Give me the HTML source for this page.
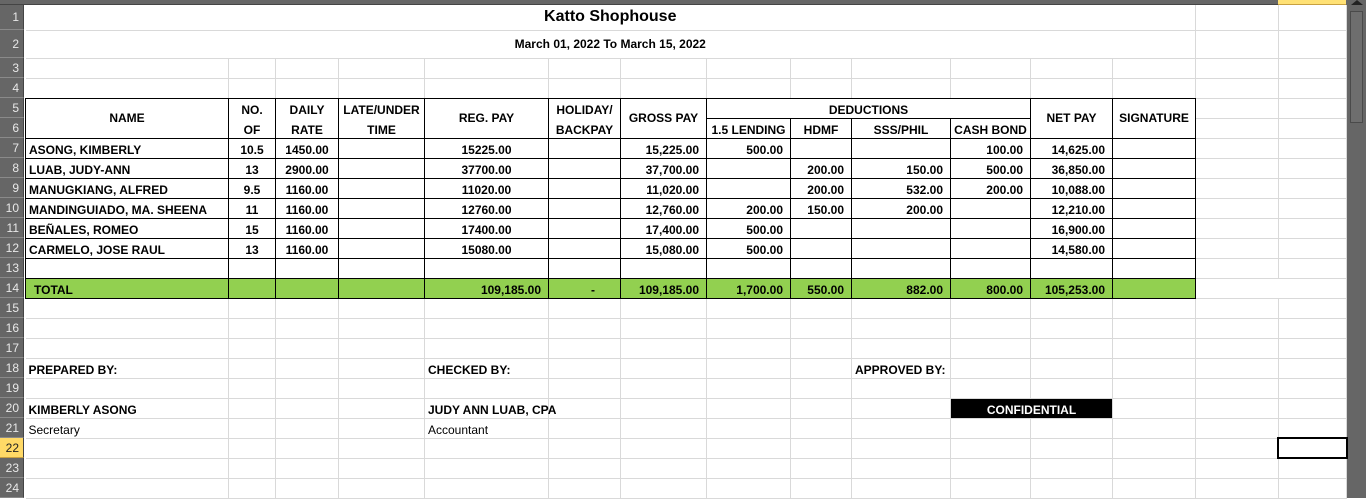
<!DOCTYPE html>
<html><head><meta charset="utf-8"><style>
body{margin:0;width:1366px;height:498px;overflow:hidden;background:#fff;position:relative;font-family:"Liberation Sans",sans-serif;}
.hdr{position:absolute;left:0;top:0;width:1346px;height:5px;background:#666;border-bottom:1px solid #444;box-sizing:border-box}
.rh{position:absolute;left:0;width:24px;background:#666;color:#e8e8e8;font-size:12px;text-align:right;box-sizing:border-box;padding-right:4px;border-bottom:1px solid #8a8a8a;border-right:1px solid #444}
table{position:absolute;left:25px;top:5px;border-collapse:collapse;table-layout:fixed;width:1321px}
td{border:none;border-right:1px solid #d9d9d9;border-bottom:1px solid #d9d9d9;padding:0 3px;font-size:12px;font-weight:bold;white-space:nowrap;overflow:hidden;vertical-align:bottom;line-height:16px;color:#000}
tr{height:20px}
.k{border-right:1px solid #000;border-bottom:1px solid #000}
.kb{border-bottom:1px solid #000}
.kl{border-left:1px solid #000}
.c{text-align:center}
.r{text-align:right;padding-right:7px}
.g{background:#92d050}
.n{font-weight:normal}
</style></head><body>
<div class="hdr"></div>
<div style="position:absolute;left:1278px;top:0;width:68px;height:5px;background:#ffe175;border-bottom:1px solid #c8a040;box-sizing:border-box"></div>
<div style="position:absolute;left:1346px;top:0;width:20px;height:498px;background:#666"></div>
<div style="position:absolute;left:1350px;top:11px;width:13px;height:112px;background:#6e6e6e;border:1px solid #4a4a4a;box-sizing:border-box"></div>
<div style="position:absolute;left:1351px;top:0;width:0;height:0;border-left:6px solid transparent;border-right:6px solid transparent;border-bottom:5px solid #222"></div>

<div class="rh" style="top:5px;height:25px;line-height:24px">1</div>
<div class="rh" style="top:30px;height:28px;line-height:28px">2</div>
<div class="rh" style="top:58px;height:20px;line-height:20px">3</div>
<div class="rh" style="top:78px;height:20px;line-height:20px">4</div>
<div class="rh" style="top:98px;height:20px;line-height:20px">5</div>
<div class="rh" style="top:118px;height:20px;line-height:20px">6</div>
<div class="rh" style="top:138px;height:20px;line-height:20px">7</div>
<div class="rh" style="top:158px;height:20px;line-height:20px">8</div>
<div class="rh" style="top:178px;height:20px;line-height:20px">9</div>
<div class="rh" style="top:198px;height:20px;line-height:20px">10</div>
<div class="rh" style="top:218px;height:20px;line-height:20px">11</div>
<div class="rh" style="top:238px;height:20px;line-height:20px">12</div>
<div class="rh" style="top:258px;height:20px;line-height:20px">13</div>
<div class="rh" style="top:278px;height:20px;line-height:20px">14</div>
<div class="rh" style="top:298px;height:20px;line-height:20px">15</div>
<div class="rh" style="top:318px;height:20px;line-height:20px">16</div>
<div class="rh" style="top:338px;height:20px;line-height:20px">17</div>
<div class="rh" style="top:358px;height:20px;line-height:20px">18</div>
<div class="rh" style="top:378px;height:20px;line-height:20px">19</div>
<div class="rh" style="top:398px;height:20px;line-height:20px">20</div>
<div class="rh" style="top:418px;height:20px;line-height:20px">21</div>
<div class="rh" style="top:438px;height:20px;line-height:20px;background:#ffd966;color:#222;border-bottom:1px solid #c8a040">22</div>
<div class="rh" style="top:458px;height:20px;line-height:20px">23</div>
<div class="rh" style="top:478px;height:20px;line-height:20px">24</div>

<table>
<colgroup><col style="width:203px"><col style="width:47px"><col style="width:63px"><col style="width:86px"><col style="width:124px"><col style="width:72px"><col style="width:86px"><col style="width:84px"><col style="width:61px"><col style="width:99px"><col style="width:80px"><col style="width:82px"><col style="width:83px"><col style="width:83px"><col style="width:68px"></colgroup>
<tr style="height:25px"><td colspan="13" class="c" style="font-size:16px;line-height:22px;vertical-align:middle">Katto Shophouse</td><td></td><td></td></tr>
<tr style="height:28px"><td colspan="13" class="c" style="font-size:12px;line-height:24px;vertical-align:middle">March 01, 2022 To March 15, 2022</td><td></td><td></td></tr>
<tr><td></td><td></td><td></td><td></td><td></td><td></td><td></td><td></td><td></td><td></td><td></td><td></td><td></td><td></td><td></td></tr>
<tr><td class="kb"></td><td class="kb"></td><td class="kb"></td><td class="kb"></td><td class="kb"></td><td class="kb"></td><td class="kb"></td><td class="kb"></td><td class="kb"></td><td class="kb"></td><td class="kb"></td><td class="kb"></td><td class="kb"></td><td></td><td></td></tr>
<tr><td rowspan="2" class="k kl c" style="vertical-align:middle">NAME</td><td class="c" style="border-right:1px solid #000;border-bottom:none">NO.</td><td class="c" style="border-right:1px solid #000;border-bottom:none">DAILY</td><td class="c" style="border-right:1px solid #000;border-bottom:none;padding:0 1px">LATE/UNDER</td><td rowspan="2" class="k c" style="vertical-align:middle">REG. PAY</td><td class="c" style="border-right:1px solid #000;border-bottom:none">HOLIDAY/</td><td rowspan="2" class="k c" style="vertical-align:middle">GROSS PAY</td><td colspan="4" class="k c">DEDUCTIONS</td><td rowspan="2" class="k c" style="vertical-align:middle">NET PAY</td><td rowspan="2" class="k c" style="vertical-align:middle">SIGNATURE</td><td></td><td></td></tr>
<tr><td class="k c">OF</td><td class="k c">RATE</td><td class="k c">TIME</td><td class="k c">BACKPAY</td><td class="k c" style="padding:0 1px">1.5 LENDING</td><td class="k c">HDMF</td><td class="k c">SSS/PHIL</td><td class="k c" style="padding:0 1px">CASH BOND</td><td></td><td></td></tr>
<tr><td class="k kl">ASONG, KIMBERLY</td><td class="k c">10.5</td><td class="k c">1450.00</td><td class="k"></td><td class="k c">15225.00</td><td class="k"></td><td class="k r">15,225.00</td><td class="k r">500.00</td><td class="k r"></td><td class="k r"></td><td class="k r">100.00</td><td class="k r">14,625.00</td><td class="k"></td><td></td><td></td></tr>
<tr><td class="k kl">LUAB, JUDY-ANN</td><td class="k c">13</td><td class="k c">2900.00</td><td class="k"></td><td class="k c">37700.00</td><td class="k"></td><td class="k r">37,700.00</td><td class="k r"></td><td class="k r">200.00</td><td class="k r">150.00</td><td class="k r">500.00</td><td class="k r">36,850.00</td><td class="k"></td><td></td><td></td></tr>
<tr><td class="k kl">MANUGKIANG, ALFRED</td><td class="k c">9.5</td><td class="k c">1160.00</td><td class="k"></td><td class="k c">11020.00</td><td class="k"></td><td class="k r">11,020.00</td><td class="k r"></td><td class="k r">200.00</td><td class="k r">532.00</td><td class="k r">200.00</td><td class="k r">10,088.00</td><td class="k"></td><td></td><td></td></tr>
<tr><td class="k kl">MANDINGUIADO, MA. SHEENA</td><td class="k c">11</td><td class="k c">1160.00</td><td class="k"></td><td class="k c">12760.00</td><td class="k"></td><td class="k r">12,760.00</td><td class="k r">200.00</td><td class="k r">150.00</td><td class="k r">200.00</td><td class="k r"></td><td class="k r">12,210.00</td><td class="k"></td><td></td><td></td></tr>
<tr><td class="k kl">BEÑALES, ROMEO</td><td class="k c">15</td><td class="k c">1160.00</td><td class="k"></td><td class="k c">17400.00</td><td class="k"></td><td class="k r">17,400.00</td><td class="k r">500.00</td><td class="k r"></td><td class="k r"></td><td class="k r"></td><td class="k r">16,900.00</td><td class="k"></td><td></td><td></td></tr>
<tr><td class="k kl">CARMELO, JOSE RAUL</td><td class="k c">13</td><td class="k c">1160.00</td><td class="k"></td><td class="k c">15080.00</td><td class="k"></td><td class="k r">15,080.00</td><td class="k r">500.00</td><td class="k r"></td><td class="k r"></td><td class="k r"></td><td class="k r">14,580.00</td><td class="k"></td><td></td><td></td></tr>
<tr><td class="k kl"></td><td class="k"></td><td class="k"></td><td class="k"></td><td class="k"></td><td class="k"></td><td class="k"></td><td class="k"></td><td class="k"></td><td class="k"></td><td class="k"></td><td class="k"></td><td class="k"></td><td></td><td></td></tr>
<tr class="g"><td class="k kl" style="padding-left:8px">TOTAL</td><td class="k"></td><td class="k"></td><td class="k"></td><td class="k r">109,185.00</td><td class="k c" style="padding-left:20px">-</td><td class="k r">109,185.00</td><td class="k r">1,700.00</td><td class="k r">550.00</td><td class="k r">882.00</td><td class="k r">800.00</td><td class="k r">105,253.00</td><td class="k"></td><td style="background:#fff;border-right-color:#fff"></td><td style="background:#fff"></td></tr>
<tr><td></td><td></td><td></td><td></td><td></td><td></td><td></td><td></td><td></td><td></td><td></td><td></td><td></td><td></td><td></td></tr>
<tr><td></td><td></td><td></td><td></td><td></td><td></td><td></td><td></td><td></td><td></td><td></td><td></td><td></td><td></td><td></td></tr>
<tr><td></td><td></td><td></td><td></td><td></td><td></td><td></td><td></td><td></td><td></td><td></td><td></td><td></td><td></td><td></td></tr>
<tr><td>PREPARED BY:</td><td></td><td></td><td></td><td>CHECKED BY:</td><td></td><td></td><td></td><td></td><td style="overflow:visible">APPROVED BY:</td><td></td><td></td><td></td><td></td><td></td></tr>
<tr><td></td><td></td><td></td><td></td><td></td><td></td><td></td><td></td><td></td><td></td><td></td><td></td><td></td><td></td><td></td></tr>
<tr><td>KIMBERLY ASONG</td><td></td><td></td><td></td><td style="overflow:visible">JUDY ANN LUAB, CPA</td><td></td><td></td><td></td><td></td><td></td><td colspan="2" class="c" style="background:#000;color:#fff">CONFIDENTIAL</td><td></td><td></td><td></td></tr>
<tr><td class="n">Secretary</td><td></td><td></td><td></td><td class="n">Accountant</td><td></td><td></td><td></td><td></td><td></td><td></td><td></td><td></td><td></td><td></td></tr>
<tr><td></td><td></td><td></td><td></td><td></td><td></td><td></td><td></td><td></td><td></td><td></td><td></td><td></td><td></td><td></td></tr>
<tr><td></td><td></td><td></td><td></td><td></td><td></td><td></td><td></td><td></td><td></td><td></td><td></td><td></td><td></td><td></td></tr>
<tr><td></td><td></td><td></td><td></td><td></td><td></td><td></td><td></td><td></td><td></td><td></td><td></td><td></td><td></td><td></td></tr>
</table>
<div style="position:absolute;left:1277px;top:437px;width:71px;height:22px;border:2px solid #000;box-sizing:border-box"></div>
</body></html>
